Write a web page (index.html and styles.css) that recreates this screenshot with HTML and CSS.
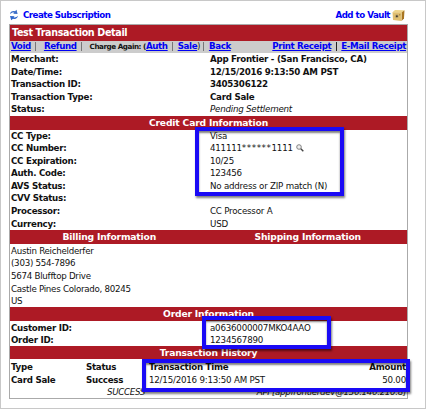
FILE: index.html
```html
<!DOCTYPE html>
<html lang="en">
<head>
  <meta charset="UTF-8" />
  <title>Test Transaction Detail</title>
  <link rel="stylesheet" href="styles.css">
</head>
<body>
  <div class="page">
    <div class="actions">
      <a class="action" href="#">
        <svg class="icon-sync" viewBox="0 0 10 12">
          <path d="M1 5.2C1.2 2.6 3.8 1.4 6 2.3L7.5.7 8.6 5 4.3 4.8 5.2 3.6C3.8 3.2 2.3 3.8 1 5.2Z" fill="#3c6fc9"/>
          <path d="M9 6.8C8.8 9.4 6.2 10.6 4 9.7L2.2 11.3 1 7 5.5 7.2 4.7 8.4C6.2 8.8 7.7 8.2 9 6.8Z" fill="#2f67cb"/>
        </svg>
        <span class="create">Create Subscription</span>
      </a>
      <a class="action" href="#">
        <span class="vault">Add to Vault</span>
        <svg class="icon-vault" viewBox="0 0 13 13">
          <path d="M.5 3.2 3 1l9.5.3-2.8 2.4z" fill="#efd58b"/>
          <path d="M9.7 3.5 12.5 1.3 12 9.5 9.5 12z" fill="#a87520"/>
          <path d="M.5 3.2 9.7 3.6 9.5 12 1 11z" fill="#e0bf70"/>
          <circle cx="4.8" cy="7.2" r="1.9" fill="#bba56e"/>
          <circle cx="4.9" cy="7.3" r="1" fill="#40382b"/>
          <circle cx="7.8" cy="5.8" r=".6" fill="#826322"/>
        </svg>
      </a>
    </div>

    <div class="detail">
      <div class="title"><span>Test Transaction Detail</span></div>
      <div class="toolbar">
        <div class="links">
          <a class="void" href="#">Void</a><i class="bar"></i>
          <a class="refund" href="#">Refund</a><i class="bar"></i>
          <span class="again">Charge Again: (</span><a class="auth" href="#">Auth</a><i class="bar"></i>
          <a class="sale" href="#">Sale</a><span class="paren">)</span><i class="bar"></i>
          <a class="back" href="#">Back</a>
        </div>
        <div class="receipts"><a href="#">Print Receipt</a><i class="bar dark"></i><a href="#">E-Mail Receipt</a></div>
      </div>

      <div class="rows strong">
        <div class="row"><b>Merchant:</b><span>App Frontier - (San Francisco, CA)</span></div>
        <div class="row"><b>Date/Time:</b><span>12/15/2016 9:13:50 AM PST</span></div>
        <div class="row"><b>Transaction ID:</b><span>3405306122</span></div>
        <div class="row"><b>Transaction Type:</b><span>Card Sale</span></div>
        <div class="row"><b>Status:</b><em>Pending Settlement</em></div>
      </div>

      <div class="section">Credit Card Information</div>
      <div class="rows">
        <div class="row"><b>CC Type:</b><span>Visa</span></div>
        <div class="row"><b>CC Number:</b><span class="number">411111<span class="mask">******</span>1111</span>
          <svg class="icon-search" viewBox="0 0 8 8"><circle cx="3" cy="3" r="2.3" fill="#eee" stroke="#777" stroke-width=".9"/><path d="M4.8 4.8 7.3 7.3" stroke="#444" stroke-width="1.4"/></svg>
        </div>
        <div class="row"><b>CC Expiration:</b><span>10/25</span></div>
        <div class="row"><b>Auth. Code:</b><span>123456</span></div>
        <div class="row"><b>AVS Status:</b><span>No address or ZIP match (N)</span></div>
        <div class="row"><b>CVV Status:</b></div>
        <div class="row"><b>Processor:</b><span>CC Processor A</span></div>
        <div class="row"><b>Currency:</b><span>USD</span></div>
      </div>

      <div class="section split"><span>Billing Information</span><span>Shipping Information</span></div>
      <div class="rows address">
        <div class="row">Austin Reichelderfer</div>
        <div class="row">(303) 554-7896</div>
        <div class="row">5674 Blufftop Drive</div>
        <div class="row">Castle Pines Colorado, 80245</div>
        <div class="row">US</div>
      </div>

      <div class="section">Order Information</div>
      <div class="rows order">
        <div class="row"><b>Customer ID:</b><span class="customer">a0636000007MKO4AAO</span></div>
        <div class="row"><b>Order ID:</b><span>1234567890</span></div>
      </div>

      <div class="section">Transaction History</div>
      <div class="rows history">
        <div class="row"><b>Type</b><b>Status</b><b class="time">Transaction Time</b><b class="amount">Amount</b></div>
        <div class="row"><b>Card Sale</b><b>Success</b><span class="time">12/15/2016 9:13:50 AM PST</span><span class="amount">50.00</span></div>
        <div class="row note"><em>SUCCESS</em><em>API [appfrontierdev@136.146.210.8]</em></div>
      </div>
    </div>

    <div class="mark mark-card"></div>
    <div class="mark mark-order"></div>
    <div class="mark mark-history"></div>
  </div>
</body>
</html>
```
FILE: styles.css
```css
* { margin: 0; padding: 0; box-sizing: border-box; }
body {
  font-family: Verdana, "DejaVu Sans", sans-serif;
  font-size: 8.7px;
  color: #111;
  background: #fff;
}
a { color: #0000f5; font-weight: bold; }
.page {
  position: relative;
  width: 426px;
  height: 409px;
  padding: 7px 17px 0 8px;
  border: 1px solid #c8c8c8;
  overflow: hidden;
}

/* Links above the table */
.actions {
  display: flex;
  justify-content: space-between;
  height: 16px;
}
.action {
  display: flex;
  align-items: center;
  height: 14px;
  text-decoration: none;
  letter-spacing: -0.52px;
}
.icon-sync { width: 10px; height: 12px; margin-right: 4px; }
.icon-vault { width: 13px; height: 13px; margin: 0 3px 0 2px; }

/* Detail table */
.detail {
  width: 399px;
  height: 375px;
  border: 1px solid #aaa;
}
.title {
  height: 15.5px;
  padding-left: 2px;
  line-height: 16px;
  font-size: 9.6px;
  font-weight: bold;
  letter-spacing: -0.36px;
  color: #fff;
  background: #ad1a25;
}
.toolbar {
  display: flex;
  justify-content: space-between;
  height: 12.5px;
  padding: 0 1px;
  line-height: 13px;
  letter-spacing: -0.38px;
  background: #ccc;
}
.links, .receipts { display: flex; align-items: center; }
.bar { width: 1px; height: 9px; margin: 0 4.5px; background: #777; }
.bar.dark { background: #222; }
.refund { margin-left: 3px; }
.again { margin-left: 3px; font-size: 7.2px; font-weight: bold; letter-spacing: -0.45px; }
.paren { font-size: 8px; margin-right: -1px; }

.row {
  display: flex;
  height: 12.57px;
  padding: 0 1px;
  line-height: 13px;
  white-space: nowrap;
  letter-spacing: -0.22px;
}
.row b { width: 199px; letter-spacing: -0.27px; }
.strong span { font-weight: bold; letter-spacing: -0.27px; }
.address .row { letter-spacing: -0.27px; }
.address .row, .order .row, .history .row { line-height: 14px; }
.mask { letter-spacing: 0.6px; }
.icon-search { width: 8px; height: 8px; margin: 2px 0 0 3px; }

.section {
  height: 13.8px;
  line-height: 14px;
  text-align: center;
  font-weight: bold;
  font-size: 9.2px;
  letter-spacing: -0.17px;
  color: #fff;
  background: #ad1a25;
}
.split { display: flex; }
.split span { width: 50%; }

/* History columns */
.history { padding-top: 1px; }
.history .row b:nth-child(1) { width: 75px; }
.history .row b:nth-child(2) { width: 63px; }
.history .row .time { flex: 1; width: auto; }
.history .row .amount { width: 60px; text-align: right; }
.history .note { justify-content: space-between; padding-left: 97px; line-height: 12px; letter-spacing: -0.32px; }

/* Highlight frames */
.mark {
  position: absolute;
  border: 4px solid #1a0af5;
  box-shadow: 1px 2px 2px rgba(0,0,0,0.5), inset 0 2px 2px rgba(0,0,0,0.5);
}
.mark-card { left: 194px; top: 126px; width: 149px; height: 69px; }
.mark-order { left: 201px; top: 315px; width: 129px; height: 33px; }
.mark-history { left: 141px; top: 358px; width: 268px; height: 33px; }
```
